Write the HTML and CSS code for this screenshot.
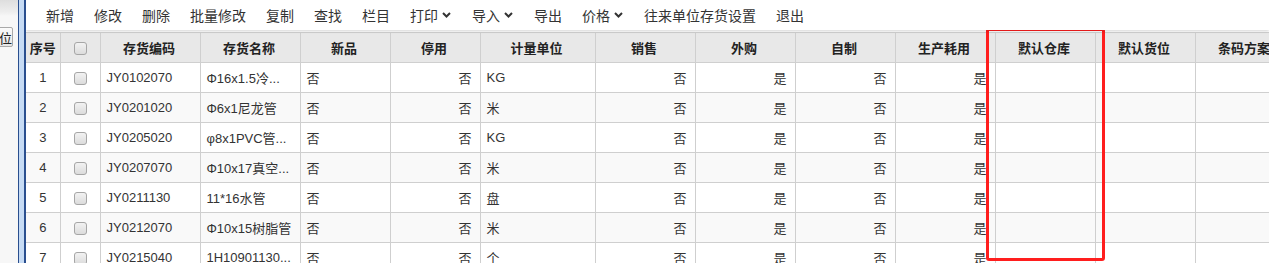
FILE: index.html
```html
<!DOCTYPE html>
<html>
<head>
    <meta charset="UTF-8">
    <title>存货档案</title>
    <link rel="stylesheet" href="styles.css">
</head>
<body>
<div class="page">
    <div class="side">
        <button class="side-btn">位</button>
    </div>
    <div class="splitter"></div>
    <div class="main">
        <div class="toolbar">
            <span class="tool">新增</span>
            <span class="tool">修改</span>
            <span class="tool">删除</span>
            <span class="tool">批量修改</span>
            <span class="tool">复制</span>
            <span class="tool">查找</span>
            <span class="tool">栏目</span>
            <span class="tool">打印<svg class="caret" width="9" height="6" viewBox="0 0 9 6"><polyline points="1,1 4.5,4.5 8,1"/></svg></span>
            <span class="tool">导入<svg class="caret" width="9" height="6" viewBox="0 0 9 6"><polyline points="1,1 4.5,4.5 8,1"/></svg></span>
            <span class="tool">导出</span>
            <span class="tool">价格<svg class="caret" width="9" height="6" viewBox="0 0 9 6"><polyline points="1,1 4.5,4.5 8,1"/></svg></span>
            <span class="tool">往来单位存货设置</span>
            <span class="tool">退出</span>
        </div>

        <table class="grid">
            <colgroup>
                <col style="width:34px">
                <col style="width:40px">
                <col style="width:100px">
                <col style="width:100px">
                <col style="width:90px">
                <col style="width:90px">
                <col style="width:115px">
                <col style="width:100px">
                <col style="width:100px">
                <col style="width:100px">
                <col style="width:100px">
                <col style="width:100px">
                <col style="width:100px">
                <col style="width:100px">
            </colgroup>
            <thead>
            <tr>
                <th>序号</th>
                <th><span class="check"></span></th>
                <th>存货编码</th>
                <th>存货名称</th>
                <th>新品</th>
                <th>停用</th>
                <th>计量单位</th>
                <th>销售</th>
                <th>外购</th>
                <th>自制</th>
                <th>生产耗用</th>
                <th>默认仓库</th>
                <th>默认货位</th>
                <th>条码方案</th>
            </tr>
            </thead>
            <tbody>
            <tr>
                <td class="c">1</td><td class="c"><span class="check"></span></td>
                <td>JY0102070</td><td>Φ16x1.5冷...</td><td>否</td><td class="r">否</td><td>KG</td>
                <td class="r">否</td><td class="r">是</td><td class="r">否</td><td class="r">是</td><td></td><td></td><td></td>
            </tr>
            <tr>
                <td class="c">2</td><td class="c"><span class="check"></span></td>
                <td>JY0201020</td><td>Φ6x1尼龙管</td><td>否</td><td class="r">否</td><td>米</td>
                <td class="r">否</td><td class="r">是</td><td class="r">否</td><td class="r">是</td><td></td><td></td><td></td>
            </tr>
            <tr>
                <td class="c">3</td><td class="c"><span class="check"></span></td>
                <td>JY0205020</td><td>φ8x1PVC管...</td><td>否</td><td class="r">否</td><td>KG</td>
                <td class="r">否</td><td class="r">是</td><td class="r">否</td><td class="r">是</td><td></td><td></td><td></td>
            </tr>
            <tr>
                <td class="c">4</td><td class="c"><span class="check"></span></td>
                <td>JY0207070</td><td>Φ10x17真空...</td><td>否</td><td class="r">否</td><td>米</td>
                <td class="r">否</td><td class="r">是</td><td class="r">否</td><td class="r">是</td><td></td><td></td><td></td>
            </tr>
            <tr>
                <td class="c">5</td><td class="c"><span class="check"></span></td>
                <td>JY0211130</td><td>11*16水管</td><td>否</td><td class="r">否</td><td>盘</td>
                <td class="r">否</td><td class="r">是</td><td class="r">否</td><td class="r">是</td><td></td><td></td><td></td>
            </tr>
            <tr>
                <td class="c">6</td><td class="c"><span class="check"></span></td>
                <td>JY0212070</td><td>Φ10x15树脂管</td><td>否</td><td class="r">否</td><td>米</td>
                <td class="r">否</td><td class="r">是</td><td class="r">否</td><td class="r">是</td><td></td><td></td><td></td>
            </tr>
            <tr>
                <td class="c">7</td><td class="c"><span class="check"></span></td>
                <td>JY0215040</td><td>1H10901130...</td><td>否</td><td class="r">否</td><td>个</td>
                <td class="r">否</td><td class="r">是</td><td class="r">否</td><td class="r">是</td><td></td><td></td><td></td>
            </tr>
            </tbody>
        </table>
    </div>
</div>

<div class="mark"></div>
</body>
</html>
```

FILE: styles.css
```css
html, body {
    margin: 0;
    padding: 0;
}

body {
    width: 1269px;
    height: 263px;
    overflow: hidden;
    position: relative;
    background-color: #ffffff;
    font-family: "Liberation Sans", Arial, "Noto Sans CJK SC", sans-serif;
    font-size: 13px;
    color: #333333;
}

.page {
    display: flex;
    height: 263px;
}

.side {
    width: 18px;
    flex-shrink: 0;
    display: flex;
    justify-content: flex-end;
    align-items: flex-start;
    overflow: hidden;
    background: linear-gradient(#dedede 0, #eeeeee 12px, #f7f7f7 16px, #f7f7f7 100%);
}

.side-btn {
    flex-shrink: 0;
    margin: 27px 5px 0 -1px;
    height: 20px;
    padding: 0 0 0 1px;
    font-family: inherit;
    font-size: 13px;
    color: #222222;
    border: 1px solid #a9a9a9;
    border-radius: 2px;
    background: linear-gradient(#fbfbfb, #e6e6e6);
}

.splitter {
    width: 5px;
    flex-shrink: 0;
    border-left: 1px solid #2a4f8f;
    border-right: 2px solid #2a4f8f;
    background-color: #c6dbf4;
}

.main {
    flex: 1;
    min-width: 0;
    overflow: hidden;
}

.toolbar {
    display: flex;
    align-items: center;
    height: 30px;
    padding-left: 10px;
    font-size: 14px;
    color: #333333;
    background-color: #ffffff;
    box-shadow: 0 1px 3px rgba(0, 0, 0, 0.18);
    position: relative;
    z-index: 1;
}

.tool {
    display: flex;
    align-items: center;
    margin: 0 10px;
    white-space: nowrap;
    cursor: pointer;
}

.caret {
    margin-left: 4px;
    margin-right: 1px;
    fill: none;
    stroke: #333333;
    stroke-width: 2;
}

.grid {
    margin-top: 2px;
    table-layout: fixed;
    width: 1269px;
    border-collapse: collapse;
    border-left: none;
}

.grid th,
.grid td {
    height: 30px;
    padding: 0 8px 0 6px;
    border: 1px solid #cfcfcf;
    white-space: nowrap;
    overflow: hidden;
    box-sizing: border-box;
}

.grid th:first-child,
.grid td:first-child {
    border-left: none;
    padding: 0;
}

.grid th {
    background-color: #e8e8e8;
    font-weight: bold;
    color: #222222;
    text-align: center;
}

.grid td {
    text-align: left;
}

.grid tbody tr:nth-child(even) td {
    background-color: #f9f9f9;
}

.grid td.c {
    text-align: center;
    padding: 0;
}

.grid td.r {
    text-align: right;
}

.grid th:nth-child(2) {
    padding: 0;
}

.check {
    display: inline-block;
    width: 11px;
    height: 11px;
    vertical-align: middle;
    border: 1px solid #a6a6a6;
    border-radius: 3px;
    background: linear-gradient(#f2f2f2, #dcdcdc);
}

/* red annotation frame around the warehouse column */
.mark {
    position: absolute;
    left: 986px;
    top: 28px;
    width: 113px;
    height: 227px;
    border: 3px solid #ff1e1e;
    border-radius: 3px;
    pointer-events: none;
}
```
